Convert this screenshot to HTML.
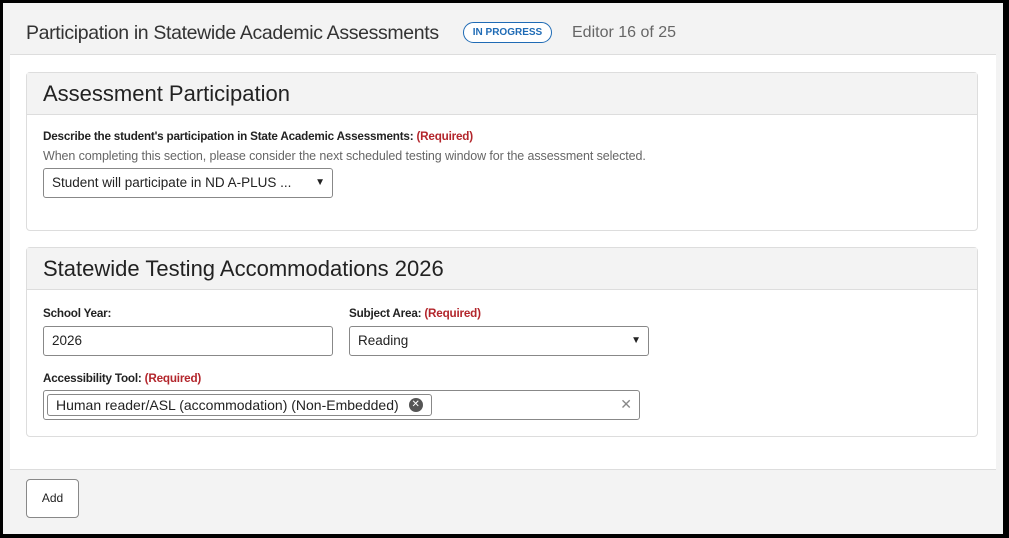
<!DOCTYPE html>
<html><head><style>
*{box-sizing:border-box;margin:0;padding:0}
body{width:1009px;height:538px;background:#000;font-family:"Liberation Sans",sans-serif;position:relative;overflow:hidden;color:#222}
.frame{position:absolute;left:3px;top:3px;width:1000px;height:531px;background:#f3f3f3}
.top{position:absolute;left:7px;top:2px;width:986px;height:50px;border-bottom:1px solid #ddd;background:#f3f3f3}
.title{position:absolute;left:16px;top:17px;font-size:19.5px;color:#333;letter-spacing:-0.35px}
.badge{position:absolute;left:453px;top:17px;width:89px;height:21px;border:1px solid #1f6bb5;border-radius:11px;font-size:10px;font-weight:bold;color:#1f6bb5;text-align:center;line-height:19px;background:#fff}
.ed{position:absolute;left:562px;top:19px;font-size:16px;color:#666}
.main{position:absolute;left:7px;top:52px;width:986px;height:414px;background:#fff}
.card{position:absolute;left:16px;width:952px;border:1px solid #ddd;border-radius:4px;background:#fff}
.ch{height:42px;background:#f3f3f3;border-bottom:1px solid #ddd;font-size:22px;padding:8px 0 0 16px;color:#222}
.lbl{position:absolute;font-size:11.7px;font-weight:bold;color:#222;letter-spacing:-0.2px}
.req{color:#b3262c}
.hint{position:absolute;font-size:12.5px;color:#666;letter-spacing:-0.1px}
.in{position:absolute;height:30px;border:1px solid #888;border-radius:3px;font-size:13.5px;padding:6px 0 0 8px;color:#222;background:#fff}
.arr{position:absolute;right:7px;top:8px;font-size:10px}
.foot{position:absolute;left:7px;top:466px;width:986px;height:58px;background:#f3f3f3;border-top:1px solid #ddd}
.btn{position:absolute;left:16px;top:9px;width:53px;height:39px;border:1px solid #888;border-radius:4px;background:#fff;font-size:12px;text-align:center;line-height:37px}
</style></head><body>
<div class="frame">
 <div class="top">
  <div class="title">Participation in Statewide Academic Assessments</div>
  <div class="badge">IN PROGRESS</div>
  <div class="ed">Editor 16 of 25</div>
 </div>
 <div class="main">
  <div class="card" style="top:17px;height:159px">
   <div class="ch">Assessment Participation</div>
   <div class="lbl" style="left:16px;top:57px">Describe the student's participation in State Academic Assessments: <span class="req">(Required)</span></div>
   <div class="hint" style="left:16px;top:76px">When completing this section, please consider the next scheduled testing window for the assessment selected.</div>
   <div class="in" style="left:16px;top:95px;width:290px">Student will participate in ND A-PLUS ...<span class="arr">▼</span></div>
  </div>
  <div class="card" style="top:192px;height:190px">
   <div class="ch">Statewide Testing Accommodations 2026</div>
   <div class="lbl" style="left:16px;top:59px">School Year:</div>
   <div class="lbl" style="left:322px;top:59px">Subject Area: <span class="req">(Required)</span></div>
   <div class="in" style="left:16px;top:78px;width:290px">2026</div>
   <div class="in" style="left:322px;top:78px;width:300px">Reading<span class="arr">▼</span></div>
   <div class="lbl" style="left:16px;top:124px">Accessibility Tool: <span class="req">(Required)</span></div>
   <div class="in" style="left:16px;top:142px;width:597px;padding:3px">
    <div style="display:inline-flex;align-items:center;border:1px solid #888;border-radius:3px;height:22px;padding:0 8px;font-size:14px">Human reader/ASL (accommodation) (Non-Embedded)<span style="display:inline-block;width:14px;height:14px;border-radius:50%;background:#555;color:#fff;font-size:10px;line-height:14px;text-align:center;margin-left:10px">✕</span></div>
    <span style="position:absolute;right:7px;top:5px;color:#888;font-size:14px">✕</span>
   </div>
  </div>
 </div>
 <div class="foot"><div class="btn">Add</div></div>
</div>
</body></html>
